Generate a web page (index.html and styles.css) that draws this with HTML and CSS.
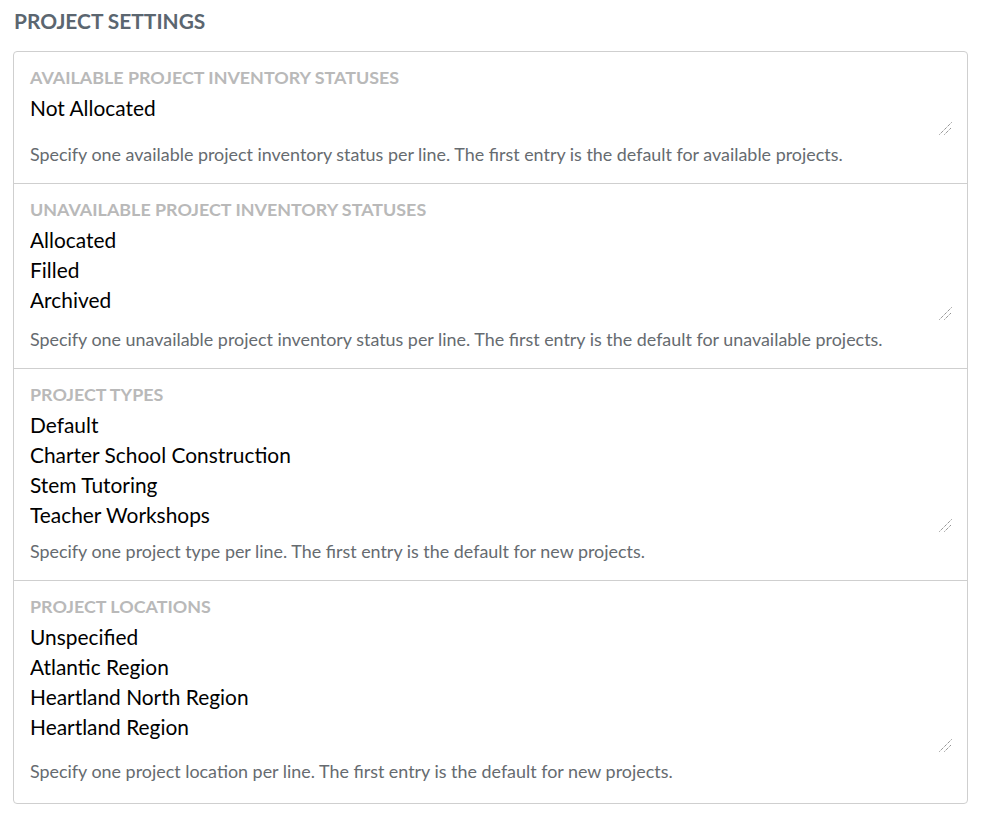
FILE: index.html
```html
<!DOCTYPE html>
<html lang="en">
<head>
<meta charset="utf-8">
<title>Project Settings</title>
<link rel="stylesheet" href="styles.css">
</head>
<body>
<div class="page">
  <h2 class="title">PROJECT SETTINGS</h2>
  <div class="card">
    <div class="section">
      <label class="label" for="avail">AVAILABLE PROJECT INVENTORY STATUSES</label>
      <textarea id="avail" class="field h-avail">Not Allocated</textarea>
      <p class="help">Specify one available project inventory status per line. The first entry is the default for available projects.</p>
    </div>
    <div class="section">
      <label class="label" for="unavail">UNAVAILABLE PROJECT INVENTORY STATUSES</label>
      <textarea id="unavail" class="field h-unavail">Allocated
Filled
Archived</textarea>
      <p class="help">Specify one unavailable project inventory status per line. The first entry is the default for unavailable projects.</p>
    </div>
    <div class="section">
      <label class="label" for="types">PROJECT TYPES</label>
      <textarea id="types" class="field h-types">Default
Charter School Construction
Stem Tutoring
Teacher Workshops</textarea>
      <p class="help">Specify one project type per line. The first entry is the default for new projects.</p>
    </div>
    <div class="section">
      <label class="label" for="locs">PROJECT LOCATIONS</label>
      <textarea id="locs" class="field h-locs">Unspecified
Atlantic Region
Heartland North Region
Heartland Region</textarea>
      <p class="help">Specify one project location per line. The first entry is the default for new projects.</p>
    </div>
  </div>
</div>
</body>
</html>
```

FILE: styles.css
```css
html, body {
  margin: 0;
  padding: 0;
  background: #ffffff;
}
body {
  font-family: Lato, "Open Sans", "Liberation Sans", sans-serif;
}
.page {
  padding: 9px 13px 0 13px;
  width: 955px;
}
.title {
  margin: 0 0 0 1px;
  font-size: 20.9px;
  line-height: 24px;
  font-weight: 700;
  color: #5b6670;
}
.card {
  margin-top: 18px;
  border: 1px solid #cfcfcf;
  border-radius: 4px;
}
.section {
  display: flex;
  flex-direction: column;
  padding: 15px 16px 19px 16px;
  border-top: 1px solid #cfcfcf;
}
.section:first-child {
  border-top: none;
  padding-top: 15px;
}
.section:last-child {
  padding-bottom: 22px;
}
.label {
  font-size: 17.9px;
  line-height: 20px;
  font-weight: 700;
  color: #b9b9b9;
}
.field {
  margin-top: 6px;
  border: none;
  outline: none;
  padding: 0;
  font-family: Lato, "Open Sans", "Liberation Sans", sans-serif;
  font-size: 20.9px;
  line-height: 30px;
  color: #000;
  background: transparent;
  resize: vertical;
  overflow: hidden;
  width: 923px;
}
.field::-webkit-scrollbar {
  width: 16px;
  height: 16px;
}
.field::-webkit-resizer {
  background: url("data:image/svg+xml,%3Csvg xmlns='http://www.w3.org/2000/svg' width='16' height='16'%3E%3Cpath d='M2.5 14.5 L14.5 2.5 M7.5 14.5 L14.5 7.5' stroke='%23666' stroke-width='1' stroke-dasharray='1 1' fill='none'/%3E%3C/svg%3E") no-repeat right bottom;
}
.h-avail { height: 43px; }
.h-unavail { height: 96px; }
.h-types { height: 123px; }
.h-locs { height: 131px; }
.help {
  margin: 8px 0 0 0;
  font-size: 17.9px;
  line-height: 20px;
  color: #666b70;
}
```
